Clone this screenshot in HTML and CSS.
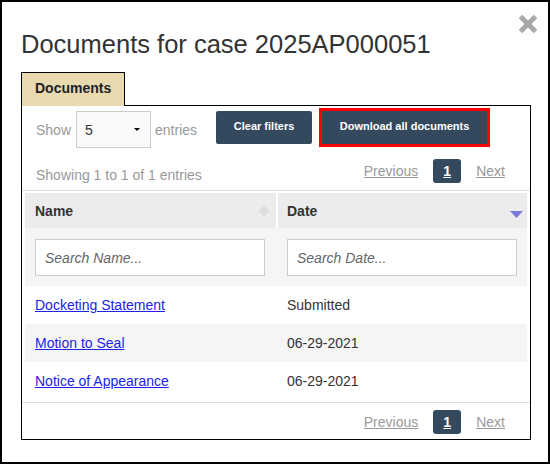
FILE: index.html
```html
<!DOCTYPE html>
<html lang="en">
<head>
<meta charset="utf-8">
<title>Documents for case 2025AP000051</title>
<link rel="stylesheet" href="styles.css">
</head>
<body>
<div class="frame">
  <button class="close" aria-label="Close">
    <svg width="20" height="20" viewBox="0 0 20 20"><path d="M2.5 2.5 L17.5 17.5 M17.5 2.5 L2.5 17.5" stroke="#a8a8a8" stroke-width="5" fill="none"/></svg>
  </button>
  <h1 class="title">Documents for case 2025AP000051</h1>
  <div class="tabs"><div class="tab">Documents</div></div>
  <div class="panel">
    <div class="toolbar">
      <div class="length">
        <span>Show</span>
        <span class="select"><span>5</span><span class="caret"></span></span>
        <span>entries</span>
      </div>
      <button class="btn btn-clear">Clear filters</button>
      <button class="btn btn-download">Download all documents</button>
    </div>
    <div class="info-row">
      <div class="info">Showing 1 to 1 of 1 entries</div>
      <div class="paginate">
        <span class="pg-link">Previous</span>
        <span class="pg-current">1</span>
        <span class="pg-link">Next</span>
      </div>
    </div>
    <div class="table-wrap">
      <div class="grid">
        <div class="th th-name"><span>Name</span>
          <svg class="sort-both" width="12" height="12" viewBox="0 0 12 12"><polygon points="6,0.5 11.5,6 6,11.5 0.5,6" fill="#dedede"/></svg>
        </div>
        <div class="th th-date"><span>Date</span>
          <svg class="sort-desc" width="13" height="7" viewBox="0 0 13 7"><polygon points="0,0 13,0 6.5,7" fill="#7a7ad8"/></svg>
        </div>
        <div class="filter"><input class="search" type="text" placeholder="Search Name..."></div>
        <div class="filter filter-date"><input class="search" type="text" placeholder="Search Date..."></div>

        <div class="td"><a href="#">Docketing Statement</a></div>
        <div class="td td-date">Submitted</div>
        <div class="td odd"><a href="#">Motion to Seal</a></div>
        <div class="td td-date odd">06-29-2021</div>
        <div class="td"><a href="#">Notice of Appearance</a></div>
        <div class="td td-date">06-29-2021</div>
      </div>
    </div>
    <div class="bottom-row">
      <div class="paginate">
        <span class="pg-link">Previous</span>
        <span class="pg-current">1</span>
        <span class="pg-link">Next</span>
      </div>
    </div>
  </div>
</div>
</body>
</html>
```
FILE: styles.css
```css
* { box-sizing: border-box; }
html, body { margin: 0; padding: 0; background: #fff; }
body { font-family: "Liberation Sans", Arial, sans-serif; color: #333; font-size: 14px; }

.frame {
  position: relative;
  width: 550px;
  height: 464px;
  border: 2px solid #000;
  padding: 0 17px 0 19px;
  overflow: hidden;
}

.close {
  position: absolute;
  top: 12px;
  left: 516px;
  width: 20px;
  height: 20px;
  padding: 0;
  border: 0;
  background: none;
  display: block;
}
.close svg { display: block; }

.title {
  margin: 27px 0 0;
  font-size: 25.5px;
  line-height: 30px;
  font-weight: normal;
  color: #333;
}

.tabs { margin-top: 13px; display: flex; margin-bottom: -1px; position: relative; z-index: 1; }
.tab {
  height: 34px;
  border: 1px solid #000;
  border-bottom: 0;
  background: #e9d9ae;
  padding: 0 13px 2px;
  font-weight: bold;
  font-size: 14px;
  line-height: 31px;
  color: #222;
}

.panel {
  border: 1px solid #000;
  height: 335px;
}

.toolbar {
  display: flex;
  align-items: flex-start;
  padding: 5px 0 0 14px;
  height: 42px;
}
.length {
  display: flex;
  align-items: center;
  gap: 4px;
  height: 37px;
  color: #999;
  font-size: 14px;
}
.length > span:first-child { margin-right: 1px; }
.select {
  width: 75px;
  height: 37px;
  border: 1px solid #ccc;
  background: #fafafa;
  display: flex;
  align-items: center;
  justify-content: space-between;
  padding: 0 10px 0 8px;
  color: #333;
}
.caret {
  width: 0;
  height: 0;
  border-left: 3px solid transparent;
  border-right: 3px solid transparent;
  border-top: 3px solid #000;
}

.btn {
  height: 33px;
  border: 0;
  border-radius: 2px;
  background: #34495e;
  color: #fff;
  font-family: "Liberation Sans", Arial, sans-serif;
  font-weight: bold;
  font-size: 11px;
  padding: 0 17px 3px;
  margin: 0;
}
.btn-clear { margin-left: 19px; width: 96px; }
.btn-download {
  margin-left: 10px;
  width: 165px;
  border-radius: 0;
  outline: 3px solid #f00;
}

.info-row {
  display: flex;
  justify-content: space-between;
  align-items: flex-start;
  height: 42px;
  padding-left: 14px;
}
.info {
  margin-top: 17px;
  line-height: 20px;
  color: #999;
  font-size: 14px;
}
.paginate {
  display: flex;
  align-items: center;
  gap: 15px;
  margin-top: 11px;
  margin-right: 25px;
}
.pg-link {
  color: #999;
  text-decoration: underline;
  font-size: 14px;
}
.pg-current {
  width: 28px;
  height: 24px;
  border-radius: 3px;
  background: #34495e;
  color: #fff;
  font-weight: bold;
  text-decoration: underline;
  display: flex;
  align-items: center;
  justify-content: center;
  font-size: 14px;
}

.table-wrap {
  border-top: 1px solid #ddd;
  border-bottom: 1px solid #ddd;
  padding: 2px 3px 2px 3px;
}
.grid {
  display: grid;
  grid-template-columns: 253px 249px;
}
.th {
  height: 35px;
  background: #ececec;
  font-weight: bold;
  display: flex;
  align-items: center;
  justify-content: space-between;
  padding-left: 10px;
  color: #333;
}
.th-name { border-right: 2px solid #fff; padding-right: 6px; }
.th-date { padding-left: 9px; padding-right: 4px; }
.sort-both { display: block; margin-top: 1px; }
.sort-desc { display: block; margin-top: 8px; }

.filter {
  height: 58px;
  background: #f5f5f5;
  padding: 11px 0 0 10px;
}
.filter-date { padding-left: 9px; }
.search {
  display: block;
  width: 230px;
  height: 37px;
  border: 1px solid #ccc;
  background: #fff;
  padding: 0 9px;
  font-family: "Liberation Sans", Arial, sans-serif;
  font-size: 14px;
  font-style: italic;
  color: #333;
  margin: 0;
  outline: none;
}
.search::placeholder { color: #666; font-style: italic; }

.td {
  height: 38px;
  display: flex;
  align-items: center;
  padding-left: 10px;
  color: #333;
}
.td-date { padding-left: 9px; }
.td.odd { background: #f5f5f5; }
.td a { color: #2222ee; text-decoration: underline; }

.bottom-row {
  display: flex;
  justify-content: flex-end;
}
.bottom-row .paginate { margin-top: 7px; }
```
